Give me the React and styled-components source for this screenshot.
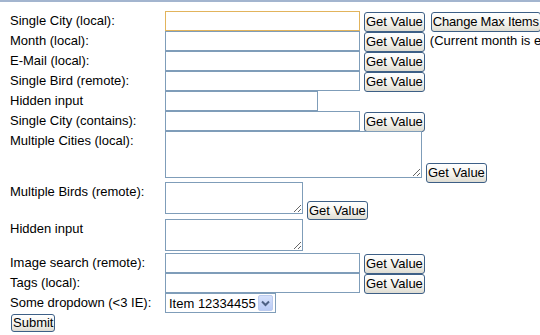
import styled, { createGlobalStyle } from "styled-components";

const GlobalStyle = createGlobalStyle`
  html, body {
    margin: 0;
    background: #fff;
    overflow: hidden;
  }
  body {
    border-top: 2px solid #a3b5cf;
    font-family: "Liberation Sans", Arial, sans-serif;
    font-size: 13px;
    color: #000;
  }
`;

const Form = styled.form`
  display: flex;
  flex-direction: column;
  padding: 9px 0 0 10px;
`;

const Row = styled.div`
  display: flex;
  align-items: flex-start;
  height: ${(p) => p.h || 20}px;
`;

const Label = styled.label`
  flex: none;
  width: 155px;
  line-height: 16px;
  padding-top: 2px;
  white-space: nowrap;
`;

const Field = styled.div`
  display: flex;
  align-items: flex-start;
  gap: 4px;
  white-space: nowrap;
`;

const Input = styled.input`
  box-sizing: border-box;
  width: ${(p) => p.w || 195}px;
  height: 20px;
  margin: 0;
  border: 1px solid ${(p) => (p.$focused ? "#e2b45c" : "#7f9db9")};
  background: #fff;
  outline: none;
  font: inherit;
`;

const Area = styled.textarea`
  box-sizing: border-box;
  width: ${(p) => p.w}px;
  height: ${(p) => p.h}px;
  margin: 0;
  border: 1px solid #7f9db9;
  background: #fff;
  outline: none;
  font: inherit;
  resize: both;
`;

const Button = styled.button`
  box-sizing: border-box;
  height: ${(p) => p.h || 20}px;
  margin: ${(p) => p.top ?? 1}px 0 0 ${(p) => p.left || 0}px;
  padding: 0 1px;
  border: 1px solid #3d5f86;
  border-radius: 3px;
  background: linear-gradient(#ffffff, #f4f3ee 55%, #dedcd2);
  font-family: "Liberation Sans", Arial, sans-serif;
  font-size: 13px;
  letter-spacing: ${(p) => p.ls || 0}px;
  line-height: 16px;
  color: #000;
  cursor: default;
`;

const Note = styled.span`
  margin-left: 1px;
  line-height: 16px;
  padding-top: 2px;
`;

const Select = styled.div`
  box-sizing: border-box;
  width: 111px;
  height: 20px;
  border: 1px solid #7f9db9;
  display: flex;
  align-items: center;
  justify-content: space-between;
  padding: 0 2px 0 3px;
  font-size: 13px;
  background: #fff;
`;

const Arrow = styled.span`
  box-sizing: border-box;
  width: 15px;
  height: 16px;
  border: 1px solid #bccbee;
  border-radius: 2px;
  background: linear-gradient(#d6e1fb, #b9cbf6);
  display: flex;
  align-items: center;
  justify-content: center;
`;

const SubmitRow = styled.div`
  padding: 1px 0 0 1px;
`;

export default function App() {
  return (
    <>
      <GlobalStyle />
      <Form onSubmit={(e) => e.preventDefault()}>
        <Row>
          <Label>Single City (local):</Label>
          <Field>
            <Input $focused />
            <Button type="button">Get Value</Button>
            <Button type="button" left={2} ls={-0.2}>Change Max Items</Button>
          </Field>
        </Row>
        <Row>
          <Label>Month (local):</Label>
          <Field>
            <Input />
            <Button type="button">Get Value</Button>
            <Note>(Current month is entered by default)</Note>
          </Field>
        </Row>
        <Row>
          <Label>E-Mail (local):</Label>
          <Field>
            <Input />
            <Button type="button">Get Value</Button>
          </Field>
        </Row>
        <Row>
          <Label>Single Bird (remote):</Label>
          <Field>
            <Input />
            <Button type="button">Get Value</Button>
          </Field>
        </Row>
        <Row>
          <Label>Hidden input</Label>
          <Field>
            <Input w={153} />
          </Field>
        </Row>
        <Row>
          <Label>Single City (contains):</Label>
          <Field>
            <Input />
            <Button type="button">Get Value</Button>
          </Field>
        </Row>
        <Row h={51}>
          <Label>Multiple Cities (local):</Label>
          <Field>
            <Area w={257} h={47} />
            <Button type="button" top={32}>Get Value</Button>
          </Field>
        </Row>
        <Row h={37}>
          <Label>Multiple Birds (remote):</Label>
          <Field>
            <Area w={138} h={32} />
            <Button type="button" top={19} h={19}>Get Value</Button>
          </Field>
        </Row>
        <Row h={34}>
          <Label>Hidden input</Label>
          <Field>
            <Area w={138} h={32} />
          </Field>
        </Row>
        <Row>
          <Label>Image search (remote):</Label>
          <Field>
            <Input />
            <Button type="button">Get Value</Button>
          </Field>
        </Row>
        <Row>
          <Label>Tags (local):</Label>
          <Field>
            <Input />
            <Button type="button">Get Value</Button>
          </Field>
        </Row>
        <Row>
          <Label>Some dropdown (&lt;3 IE):</Label>
          <Field>
            <Select>
              <span>Item 12334455</span>
              <Arrow>
                <svg width="9" height="7" viewBox="0 0 9 7">
                  <path d="M1 1.5 L4.5 5 L8 1.5" fill="none" stroke="#4d6185" strokeWidth="2" />
                </svg>
              </Arrow>
            </Select>
          </Field>
        </Row>
        <SubmitRow>
          <Button type="submit" h={18} top={0}>Submit</Button>
        </SubmitRow>
      </Form>
    </>
  );
}
